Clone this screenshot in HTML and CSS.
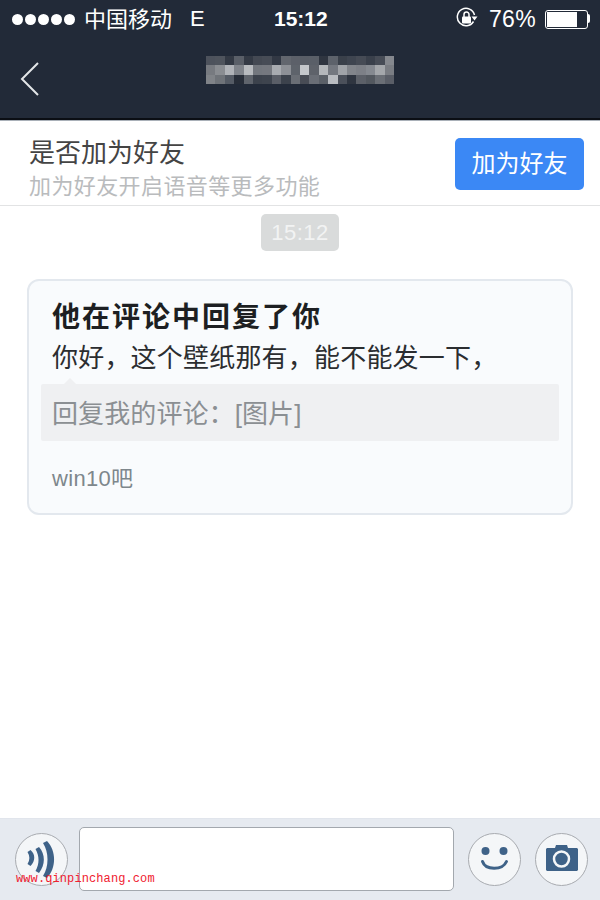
FILE: index.html
```html
<!DOCTYPE html>
<html>
<head>
    <title>Chat</title>
    <link rel="stylesheet" href="styles.css">
</head>
<body>

<div class="page">
    <div class="header">
        <div class="status">
            <div class="dots"><i></i><i></i><i></i><i></i><i></i></div>
            <span class="carrier">中国移动</span>
            <span class="net">E</span>
            <span class="clock">15:12</span>
            <svg class="lock" width="22" height="22" viewBox="0 0 22 22">
                <path d="M17.5 14.5A8.7 8.7 0 1 1 18.5 8" fill="none" stroke="#fff" stroke-width="1.5"/>
                <path d="M15.5 9.5h6l-3 4z" fill="#fff"/>
                <rect x="6" y="9.5" width="9" height="7" rx="1" fill="#fff"/>
                <path d="M8 10V7.5a2.5 2.5 0 0 1 5 0V10" fill="none" stroke="#fff" stroke-width="1.5"/>
            </svg>
            <span class="percent">76%</span>
            <div class="battery"><div class="battery-fill"></div></div>
            <div class="battery-tip"></div>
        </div>
        <div class="nav">
            <svg class="back" width="22" height="36" viewBox="0 0 22 36">
                <path d="M19 2L3 18l16 16" fill="none" stroke="#e4e6e8" stroke-width="2"/>
            </svg>
            <svg class="mosaic" id="mosaic" width="188" height="28" viewBox="0 0 20 3" preserveAspectRatio="none" shape-rendering="crispEdges"></svg>
        </div>
    </div>

    <div class="friend-bar">
        <div class="friend-text">
            <div class="friend-title">是否加为好友</div>
            <div class="friend-sub">加为好友开启语音等更多功能</div>
        </div>
        <div class="friend-btn">加为好友</div>
    </div>

    <div class="messages">
        <div class="time-pill">15:12</div>
        <div class="card">
            <div class="card-title">他在评论中回复了你</div>
            <div class="card-body">你好，这个壁纸那有，能不能发一下，</div>
            <div class="quote">回复我的评论：[图片]</div>
            <div class="card-from">win10吧</div>
        </div>
    </div>

    <div class="toolbar">
        <div class="round-btn">
            <svg width="53" height="53" viewBox="0 0 53 53">
                <path d="M12.500 19l3-2C20.500 21 20.500 28 15.500 33l-3-2C15 27 15 23 12.500 19z" fill="#3e6288"/>
                <path d="M20.500 16l3.500-2C30.500 21 30.500 32 24 40l-3.500-2C24.500 31 24.500 23 20.500 16z" fill="#3e6288"/>
                <path d="M28 10l4-2C41.500 18 41.500 35 32 45l-4-2C34 34 34 19 28 10z" fill="#3e6288"/>
            </svg>
        </div>
        <div class="text-input"></div>
        <div class="round-btn">
            <svg width="53" height="53" viewBox="0 0 53 53">
                <circle cx="17.500" cy="18" r="4" fill="#3e6288"/>
                <circle cx="35.500" cy="18" r="4" fill="#3e6288"/>
                <path d="M14.500 28.500c3 9 20 9 24 0" fill="none" stroke="#3e6288" stroke-width="3" stroke-linecap="round"/>
            </svg>
        </div>
        <div class="round-btn">
            <svg width="53" height="53" viewBox="0 0 53 53">
                <path d="M12 15h8l1-3h11l1 3h9l1 1v21l-1 1H12l-1-1V16z" fill="#3e6288"/>
                <circle cx="26.500" cy="26" r="7.500" fill="#3e6288" stroke="#f4f6f8" stroke-width="2.500"/>
            </svg>
        </div>
    </div>

    <div class="watermark">www.qinpinchang.com</div>
</div>

<script>
// pixelated contact name, 20 x 3 cells
const cells = [
    ['#4d525c','#4f545d','#333944','#5a5f68','#343a45','#444953','#474c56','#323844','#62666e','#5c6069','#595e67','#5a5f68','#2f3540','#5d626b','#3a404a','#3f4550','#464b55','#3a404b','#474c56','#85888e'],
    ['#777a80','#8a8d92','#b0b3b8','#80848b','#b8bbbf','#73777e','#75787f','#a8abb0','#8d9096','#5e636b','#c4c7cb','#5e626a','#b4b7bb','#747880','#a0a3a8','#82858b','#7d8087','#858990','#a4a7ab','#7a7d83'],
    ['#808388','#6f7379','#555b65','#272d38','#5f646c','#3c424c','#3e444e','#5a5e67','#3c424c','#6a6e75','#484c55','#6a6e76','#5b6068','#b9bcc1','#4b505a','#2f3540','#5c6068','#53585f','#6b6f76','#5a5e67']
];
const mosaic = document.getElementById('mosaic');
cells.forEach((row, y) => {
    row.forEach((color, x) => {
        const r = document.createElementNS('http://www.w3.org/2000/svg', 'rect');
        r.setAttribute('x', x);
        r.setAttribute('y', y);
        r.setAttribute('width', 1);
        r.setAttribute('height', 1);
        r.setAttribute('fill', color);
        mosaic.appendChild(r);
    });
});
</script>

</body>
</html>
```

FILE: styles.css
```css
body {
    margin: 0;
    font-family: "Liberation Sans", "Noto Sans CJK SC", sans-serif;
}
.page {
    position: relative;
    width: 600px;
    height: 900px;
    display: flex;
    flex-direction: column;
    background-color: #fff;
    overflow: hidden;
}
.header {
    height: 118px;
    background-color: #222a38;
    border-bottom: 2px solid #0b0e14;
    box-shadow: 0 1px 0 #a9b0b8;
    color: #fff;
}
.status {
    position: relative;
    height: 38px;
    display: flex;
    align-items: center;
    padding-left: 12px;
}
.dots {
    display: flex;
    gap: 2px;
    width: 72px;
}
.dots i {
    width: 11px;
    height: 11px;
    border-radius: 50%;
    background-color: #fff;
}
.carrier {
    font-size: 22px;
    width: 106px;
    margin-bottom: 4px;
}
.net {
    font-size: 22px;
}
.clock {
    position: absolute;
    left: 274px;
    font-size: 21px;
    font-weight: bold;
}
.lock {
    position: absolute;
    left: 456px;
    top: 7px;
}
.percent {
    position: absolute;
    left: 489px;
    font-size: 23px;
    letter-spacing: 0.3px;
}
.battery {
    position: absolute;
    left: 545px;
    top: 10px;
    width: 39px;
    height: 15px;
    border: 1px solid #fff;
    border-radius: 3px;
    padding: 1px;
}
.battery-fill {
    width: 76%;
    height: 100%;
    background-color: #fff;
}
.battery-tip {
    position: absolute;
    left: 587px;
    top: 14px;
    width: 3px;
    height: 9px;
    background-color: #fff;
    border-radius: 0 2px 2px 0;
}
.nav {
    position: relative;
    height: 80px;
    display: flex;
    justify-content: center;
}
.back {
    position: absolute;
    left: 19px;
    top: 23px;
}
.mosaic {
    margin-top: 18px;
}
.friend-bar {
    height: 84px;
    margin-top: 1px;
    display: flex;
    align-items: center;
    justify-content: space-between;
    padding: 0 16px 0 29px;
    border-bottom: 1px solid #e2e3e4;
}
.friend-text {
    padding-top: 13px;
}
.friend-title {
    font-size: 26px;
    line-height: 34px;
    color: #444;
}
.friend-sub {
    font-size: 22px;
    letter-spacing: 0.4px;
    line-height: 34px;
    color: #b9bbbd;
}
.friend-btn {
    width: 129px;
    height: 52px;
    margin-top: 2px;
    line-height: 52px;
    text-align: center;
    font-size: 24px;
    color: #fff;
    background-color: #3b88f5;
    border-radius: 5px;
}
.messages {
    flex: 1;
    display: flex;
    flex-direction: column;
    align-items: center;
    padding-top: 8px;
}
.time-pill {
    width: 78px;
    height: 37px;
    line-height: 37px;
    text-align: center;
    font-size: 22px;
    letter-spacing: 0.5px;
    color: #f2f3f3;
    background-color: #d9dbdb;
    border-radius: 5px;
}
.card {
    position: relative;
    box-sizing: border-box;
    width: 546px;
    height: 236px;
    margin-top: 28px;
    padding: 17px 12px 0;
    background-color: #f9fbfd;
    border: 2px solid #e3e8ee;
    border-radius: 12px;
}
.card-title {
    padding-left: 11px;
    font-size: 28px;
    letter-spacing: 2px;
    font-weight: bold;
    line-height: 40px;
    color: #1d1f22;
}
.card-body {
    padding-left: 11px;
    font-size: 26px;
    letter-spacing: 0.2px;
    line-height: 40px;
    color: #2b2d30;
}
.quote {
    position: relative;
    height: 57px;
    line-height: 60px;
    margin-top: 6px;
    padding-left: 11px;
    font-size: 26px;
    letter-spacing: 0.1px;
    color: #8b8f93;
    background-color: #eff0f2;
    border-radius: 2px;
}
.quote::before {
    content: "";
    position: absolute;
    left: 23px;
    top: -6px;
    border-left: 6px solid transparent;
    border-right: 6px solid transparent;
    border-bottom: 6px solid #eff0f2;
}
.card-from {
    margin-top: 23px;
    padding-left: 11px;
    font-size: 22px;
    letter-spacing: 0.3px;
    line-height: 30px;
    color: #7e878c;
}
.toolbar {
    height: 82px;
    box-sizing: border-box;
    display: flex;
    align-items: center;
    padding: 0 12px 0 15px;
    background-color: #e6eaf0;
    border-top: 1px solid #e1e5ec;
}
.round-btn {
    box-sizing: border-box;
    width: 53px;
    height: 53px;
    flex: none;
    border: 1px solid #a8abb0;
    border-radius: 50%;
    background-color: #f4f6f8;
}
.round-btn svg {
    display: block;
    margin: -1px;
}
.round-btn + .text-input {
    margin: 0 14px 2px 11px;
}
.text-input + .round-btn + .round-btn {
    margin-left: 14px;
}
.text-input {
    box-sizing: border-box;
    width: 375px;
    height: 64px;
    background-color: #fff;
    border: 1px solid #a3a8ae;
    border-radius: 5px;
}
.watermark {
    position: absolute;
    left: 16px;
    top: 872px;
    font-family: "Liberation Mono", monospace;
    font-size: 12px;
    letter-spacing: 0.1px;
    line-height: 14px;
    color: #f02030;
}
```
